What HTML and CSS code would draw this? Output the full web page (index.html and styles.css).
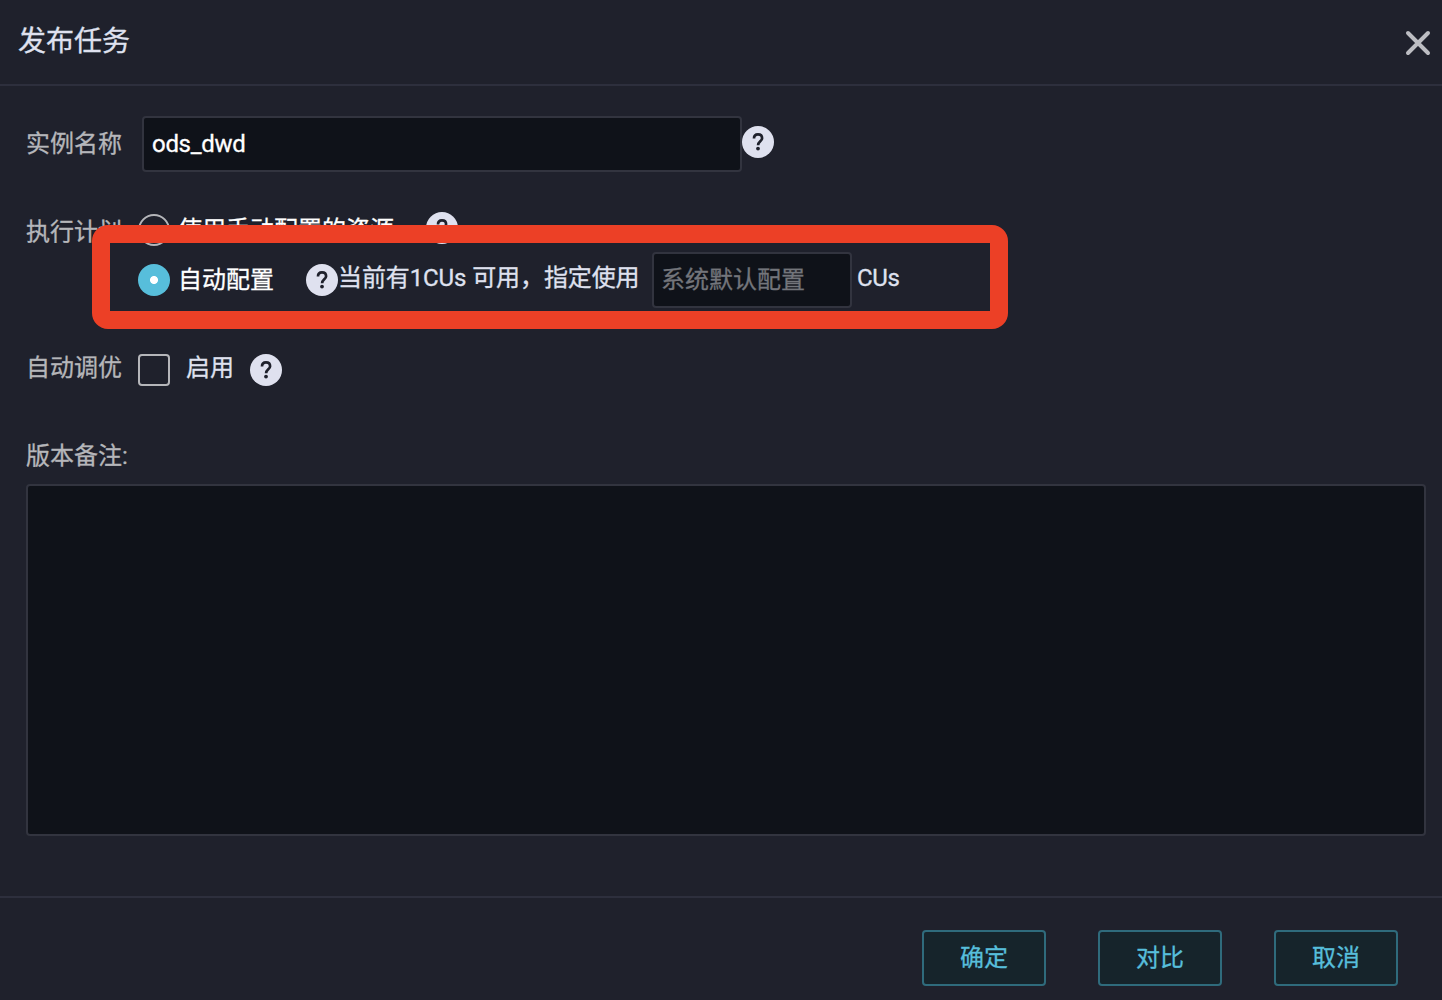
FILE: index.html
```html
<!DOCTYPE html>
<html lang="zh-CN">
<head>
<meta charset="utf-8">
<title>发布任务</title>
<link rel="stylesheet" href="styles.css">
</head>
<body>
<svg class="sprite" aria-hidden="true">
  <symbol id="help" viewBox="0 0 32 32">
    <circle class="help-disc" cx="16" cy="16" r="16"/>
    <path class="help-hook" d="M12 12.6C12 9.9 13.6 8.4 16 8.4c2.5 0 4.1 1.5 4.1 3.8 0 3-4 3.3-4 7"/>
    <circle class="help-dot" cx="16" cy="22.6" r="1.9"/>
  </symbol>
</svg>
<div class="dialog">
  <header class="header">
    <h1 class="title">发布任务</h1>
    <button class="close" aria-label="关闭"><svg width="26" height="26" viewBox="0 0 26 26"><path d="M3 3l20 20M23 3L3 23"/></svg></button>
  </header>
  <main class="body">
    <div class="row row-name">
      <span class="label">实例名称</span>
      <div class="input name-input">ods_dwd</div>
      <svg class="help help-name"><use href="#help"/></svg>
    </div>
    <div class="plan">
      <span class="label plan-label">执行计划</span>
      <div class="options">
        <div class="row option-manual">
          <span class="radio"></span>
          <span class="option-text">使用手动配置的资源</span>
          <svg class="help help-manual"><use href="#help"/></svg>
        </div>
        <div class="row option-auto">
          <span class="radio radio-on"></span>
          <span class="option-text">自动配置</span>
          <svg class="help"><use href="#help"/></svg>
          <span class="hint">当前有1CUs 可用，指定使用</span>
          <div class="input cu-input">系统默认配置</div>
          <span class="unit">CUs</span>
        </div>
      </div>
      <div class="highlight"></div>
    </div>
    <div class="row row-tune">
      <span class="label">自动调优</span>
      <span class="checkbox"></span>
      <span class="enable">启用</span>
      <svg class="help"><use href="#help"/></svg>
    </div>
    <div class="label note-label">版本备注:</div>
    <div class="note"></div>
  </main>
  <footer class="footer">
    <button class="btn">确定</button>
    <button class="btn">对比</button>
    <button class="btn">取消</button>
  </footer>
</div>
</body>
</html>
```
FILE: styles.css
```css
* { box-sizing: border-box; }
body {
  margin: 0;
  background: #1f212c;
  color: #dfe1ef;
  font: 24px/32px Roboto, "Noto Sans CJK SC", sans-serif;
  -webkit-text-stroke: 0.3px;
}
.sprite { display: none; }
.dialog {
  display: flex;
  flex-direction: column;
  height: 1000px;
  overflow: hidden;
}
.header {
  display: flex;
  justify-content: space-between;
  align-items: center;
  height: 86px;
  padding: 0 11px 0 18px;
  border-bottom: 2px solid #2d2f3d;
}
.title {
  margin: 0 0 1px;
  font-size: 28px;
  font-weight: 400;
}
.close {
  width: 26px;
  height: 26px;
  margin-top: 2px;
  padding: 0;
  border: 0;
  background: none;
}
.close svg { display: block; }
.close path {
  stroke: #bcbdc2;
  stroke-width: 4;
  stroke-linecap: round;
}
.body {
  flex: 1;
  padding: 30px 16px 0 26px;
}
.row {
  display: flex;
  align-items: center;
  white-space: nowrap;
}
.label { color: #b5b6ba; }
.input {
  display: flex;
  align-items: center;
  height: 56px;
  padding: 0 8px;
  border: 2px solid #32343f;
  border-radius: 4px;
  background: #0f1219;
}
.row-name { height: 56px; }
.row-name .label { width: 116px; }
.name-input {
  width: 600px;
  color: #fff;
  letter-spacing: -0.3px;
}
.help {
  flex: none;
  width: 32px;
  height: 32px;
}
.help-name { margin-bottom: 4px; }
.help-disc { fill: #dfe1ef; }
.help-hook {
  fill: none;
  stroke: #1f212c;
  stroke-width: 2.7;
}
.help-dot { fill: #1f212c; }
.plan {
  position: relative;
  display: flex;
  margin-top: 40px;
}
.plan-label {
  width: 112px;
  padding-top: 4px;
}
.option-manual { height: 36px; }
.option-auto {
  height: 56px;
  margin-top: 4px;
}
.radio {
  width: 32px;
  height: 32px;
  margin-right: 8px;
  border: 2px solid #b5b6ba;
  border-radius: 50%;
}
.radio-on {
  border: 0;
  background: radial-gradient(circle, #fff 3.6px, #57bedb 4.4px);
}
.option-text {
  margin-right: 32px;
  color: #fff;
}
.help-manual { margin-bottom: 4px; }
.hint {
  width: 314px;
  margin-bottom: 4px;
  letter-spacing: -0.1px;
}
.cu-input {
  width: 200px;
  padding-left: 7px;
  color: #73757b;
}
.unit {
  margin: 0 0 4px 5px;
  letter-spacing: -0.3px;
}
.highlight {
  position: absolute;
  left: 66px;
  top: 13px;
  width: 916px;
  height: 104px;
  border: 18px solid #ec4026;
  border-radius: 16px;
}
.row-tune {
  height: 32px;
  margin-top: 46px;
}
.row-tune .label {
  width: 112px;
  margin-bottom: 4px;
}
.checkbox {
  width: 32px;
  height: 32px;
  border: 2px solid #b5b6ba;
  border-radius: 4px;
}
.enable { margin: 0 16px 4px; }
.note-label { margin-top: 54px; }
.note {
  height: 352px;
  margin-top: 12px;
  border: 2px solid #32343f;
  border-radius: 4px;
  background: #0f1219;
}
.footer {
  display: flex;
  justify-content: flex-end;
  gap: 52px;
  height: 104px;
  padding: 32px 44px 0 0;
  border-top: 2px solid #2d2f3d;
}
.btn {
  width: 124px;
  height: 56px;
  padding: 0;
  border: 2px solid #2f6b7c;
  border-radius: 4px;
  background: #16242b;
  color: #57bedb;
  font: inherit;
}
```
